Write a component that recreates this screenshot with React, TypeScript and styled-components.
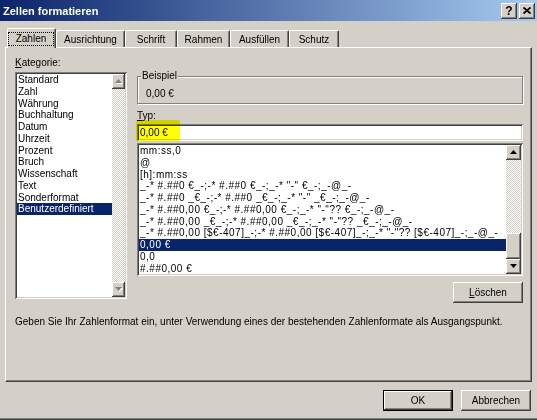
import React from "react";
import styled, { createGlobalStyle, css } from "styled-components";

const face = "#d4d0c8";
const navy = "#0a246a";

const GlobalStyle = createGlobalStyle`
  html, body {
    margin: 0;
    padding: 0;
    background: ${face};
  }
  body {
    font-family: "Liberation Sans", Arial, sans-serif;
    font-size: 10px;
    color: #000;
  }
  * {
    box-sizing: border-box;
  }
`;

const raised = css`
  box-shadow: inset -1px -1px #404040, inset 1px 1px #fff,
    inset -2px -2px #808080, inset 2px 2px ${face};
`;

const sunken = css`
  box-shadow: inset 1px 1px #808080, inset -1px -1px #fff,
    inset 2px 2px #404040, inset -2px -2px ${face};
`;

const Window = styled.div`
  width: 537px;
  height: 420px;
  display: flex;
  flex-direction: column;
  background: ${face};
  box-shadow: inset 0 -1px #404040, inset 0 -2px #808080;
`;

const TitleBar = styled.div`
  flex: none;
  height: 21px;
  display: flex;
  align-items: center;
  padding: 0 2px 0 3px;
  background: linear-gradient(to right, ${navy}, #a6caf0);
  color: #fff;
  font-weight: bold;
  font-size: 11px;
`;

const TitleText = styled.span`
  flex: 1;
`;

const CaptionButton = styled.div`
  width: 16px;
  height: 16px;
  margin-left: 2px;
  display: flex;
  align-items: center;
  justify-content: center;
  background: ${face};
  color: #000;
  font-size: 12px;
  font-weight: bold;
  ${raised};
`;

const Body = styled.div`
  flex: 1;
  display: flex;
  flex-direction: column;
  padding: 7px 5px 0;
`;

const TabStrip = styled.div`
  height: 19px;
  display: flex;
  align-items: flex-end;
  padding-left: 2px;
`;

const Tab = styled.div<{ $w: number; $active?: boolean }>`
  position: relative;
  z-index: ${(p) => (p.$active ? 1 : 0)};
  width: ${(p) => p.$w}px;
  height: ${(p) => (p.$active ? 20 : 17)}px;
  margin-bottom: ${(p) => (p.$active ? -1 : 0)}px;
  display: flex;
  align-items: center;
  justify-content: center;
  background: ${face};
  border-top: 1px solid #fff;
  border-left: 1px solid #fff;
  border-right: 1px solid #404040;
  border-radius: 2px 2px 0 0;
  box-shadow: inset -1px 0 #808080;
`;

const FocusRect = styled.span`
  flex: 1;
  height: 14px;
  margin-right: 1px;
  display: flex;
  align-items: center;
  justify-content: center;
  border: 1px dotted #000;
`;

const Panel = styled.div`
  height: 335px;
  display: grid;
  grid-template-columns: 112px 386px;
  column-gap: 10px;
  align-content: start;
  padding: 9px 8px 0 9px;
  border: 1px solid;
  border-color: #fff #404040 #404040 #fff;
  box-shadow: inset -1px -1px #808080;
`;

const Column = styled.div`
  display: flex;
  flex-direction: column;
`;

const Label = styled.div<{ $top?: number }>`
  line-height: 12px;
  margin-top: ${(p) => p.$top ?? 0}px;
`;

const Key = styled.span`
  text-decoration: underline;
`;

const GroupBox = styled.fieldset`
  margin: 13px 0 0;
  padding: 6px 8px 3px;
  border: 1px solid #808080;
  box-shadow: 1px 1px #fff, inset 1px 1px #fff;
  min-width: 0;
`;

const Legend = styled.legend`
  margin-left: -5px;
  padding: 0 1px;
  line-height: 12px;
  background: ${face};
`;

const Sample = styled.div`
  line-height: 12px;
`;

const TypeInput = styled.div`
  position: relative;
  height: 17px;
  margin-top: 2px;
  padding: 2px 3px;
  background: #fff;
  line-height: 13px;
  ${sunken};
`;

const Marker = styled.span`
  position: absolute;
  left: -1px;
  top: -4px;
  width: 44px;
  height: 21px;
  background: #ffff00;
  mix-blend-mode: multiply;
  border-radius: 2px;
  filter: blur(0.4px);
`;

const InputText = styled.span`
  position: relative;
`;

const ListBox = styled.div<{ $h: number; $top: number }>`
  height: ${(p) => p.$h}px;
  margin-top: ${(p) => p.$top}px;
  padding: 2px;
  display: flex;
  background: #fff;
  ${sunken};
`;

const Items = styled.div<{ $spacing?: number }>`
  flex: 1;
  min-width: 0;
  overflow: hidden;
  letter-spacing: ${(p) => p.$spacing ?? 0}px;
`;

const Item = styled.div<{ $sel?: boolean }>`
  height: 11.75px;
  line-height: 11.75px;
  padding-left: 1px;
  white-space: nowrap;
  background: ${(p) => (p.$sel ? navy : "transparent")};
  color: ${(p) => (p.$sel ? "#fff" : "#000")};
`;

const ScrollBar = styled.div<{ $w: number }>`
  width: ${(p) => p.$w}px;
  display: flex;
  flex-direction: column;
`;

const ScrollButton = styled.div`
  height: 15px;
  flex: none;
  display: flex;
  align-items: center;
  justify-content: center;
  background: ${face};
  ${raised};
`;

const Track = styled.div`
  flex: 1;
  background-color: ${face};
  background-image: conic-gradient(
    #fff 0 25%,
    ${face} 0 50%,
    #fff 0 75%,
    ${face} 0
  );
  background-size: 2px 2px;
`;

const Thumb = styled.div`
  height: 26px;
  flex: none;
  background: ${face};
  ${raised};
`;

const Button = styled.div<{ $default?: boolean }>`
  width: 70px;
  height: 21px;
  display: flex;
  align-items: center;
  justify-content: center;
  background: ${face};
  ${raised};
  ${(p) =>
    p.$default &&
    css`
      box-shadow: inset 0 0 0 1px #000, inset -2px -2px #404040,
        inset 2px 2px #fff, inset -3px -3px #808080;
    `}
`;

const DeleteButton = styled(Button)`
  align-self: flex-end;
  margin-top: 6px;
`;

const Hint = styled.div`
  grid-column: 1 / -1;
  margin-top: 13px;
  line-height: 12px;
`;

const Footer = styled.div`
  display: flex;
  justify-content: flex-end;
  gap: 8px;
  padding: 8px 1px 0 0;
`;

const Arrow = ({ down, off }: { down?: boolean; off?: boolean }) => {
  const d = down ? "M0 0H7L3.5 4Z" : "M0 4H7L3.5 0Z";
  return (
    <svg width="8" height="5" viewBox="0 0 8 5">
      {off && <path d={d} fill="#fff" transform="translate(1 1)" />}
      <path d={d} fill={off ? "#808080" : "#000"} />
    </svg>
  );
};

const categories = [
  "Standard",
  "Zahl",
  "Währung",
  "Buchhaltung",
  "Datum",
  "Uhrzeit",
  "Prozent",
  "Bruch",
  "Wissenschaft",
  "Text",
  "Sonderformat",
  "Benutzerdefiniert",
];

const formats = [
  "mm:ss,0",
  "@",
  "[h]:mm:ss",
  '_-* #.##0 €_-;-* #.##0 €_-;_-* "-" €_-;_-@_-',
  '_-* #.##0 _€_-;-* #.##0 _€_-;_-* "-" _€_-;_-@_-',
  '_-* #.##0,00 €_-;-* #.##0,00 €_-;_-* "-"?? €_-;_-@_-',
  '_-* #.##0,00 _€_-;-* #.##0,00 _€_-;_-* "-"?? _€_-;_-@_-',
  '_-* #.##0,00 [$€-407]_-;-* #.##0,00 [$€-407]_-;_-* "-"?? [$€-407]_-;_-@_-',
  "0,00 €",
  "0,0",
  "#.##0,00 €",
];

const tabs: [string, number][] = [
  ["Zahlen", 49],
  ["Ausrichtung", 69],
  ["Schrift", 52],
  ["Rahmen", 53],
  ["Ausfüllen", 59],
  ["Schutz", 50],
];

export default function App() {
  return (
    <>
      <GlobalStyle />
      <Window>
        <TitleBar>
          <TitleText>Zellen formatieren</TitleText>
          <CaptionButton>?</CaptionButton>
          <CaptionButton>
            <svg width="8" height="7" viewBox="0 0 8 7">
              <path d="M0.5 0.5L7.5 6.5M7.5 0.5L0.5 6.5" stroke="#000" strokeWidth="1.8" />
            </svg>
          </CaptionButton>
        </TitleBar>
        <Body>
          <TabStrip>
            {tabs.map(([name, w], i) => (
              <Tab key={name} $w={w} $active={i === 0}>
                {i === 0 ? <FocusRect>{name}</FocusRect> : name}
              </Tab>
            ))}
          </TabStrip>
          <Panel>
            <Column>
              <Label>
                <Key>K</Key>ategorie:
              </Label>
              <ListBox $h={227} $top={3}>
                <Items>
                  {categories.map((c, i) => (
                    <Item key={c} $sel={i === categories.length - 1}>
                      {c}
                    </Item>
                  ))}
                </Items>
                <ScrollBar $w={13}>
                  <ScrollButton>
                    <Arrow off />
                  </ScrollButton>
                  <Track />
                  <ScrollButton>
                    <Arrow down off />
                  </ScrollButton>
                </ScrollBar>
              </ListBox>
            </Column>
            <Column>
              <GroupBox>
                <Legend>Beispiel</Legend>
                <Sample>0,00 €</Sample>
              </GroupBox>
              <Label $top={6}>
                <Key>T</Key>yp:
              </Label>
              <TypeInput>
                <Marker />
                <InputText>0,00 €</InputText>
              </TypeInput>
              <ListBox $h={133} $top={2}>
                <Items $spacing={0.5}>
                  {formats.map((f, i) => (
                    <Item key={f} $sel={i === 8}>
                      {f}
                    </Item>
                  ))}
                </Items>
                <ScrollBar $w={15}>
                  <ScrollButton>
                    <Arrow />
                  </ScrollButton>
                  <Track />
                  <Thumb />
                  <ScrollButton>
                    <Arrow down />
                  </ScrollButton>
                </ScrollBar>
              </ListBox>
              <DeleteButton>
                <Key>L</Key>öschen
              </DeleteButton>
            </Column>
            <Hint>
              Geben Sie Ihr Zahlenformat ein, unter Verwendung eines der
              bestehenden Zahlenformate als Ausgangspunkt.
            </Hint>
          </Panel>
          <Footer>
            <Button $default>OK</Button>
            <Button>Abbrechen</Button>
          </Footer>
        </Body>
      </Window>
    </>
  );
}
